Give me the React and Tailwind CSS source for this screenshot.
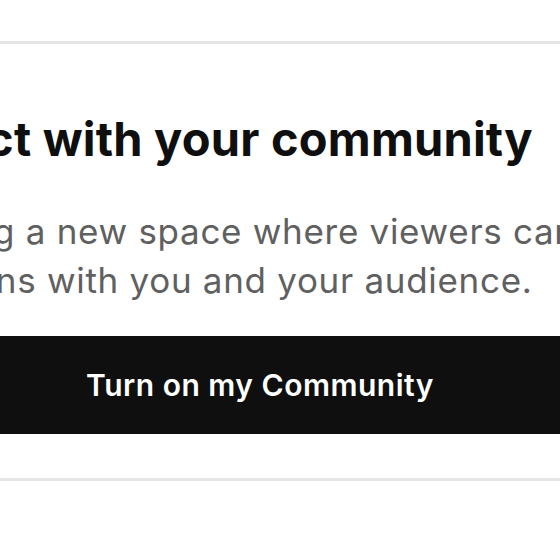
import React from 'react';

const App = () => {
    return (
        <div className="w-[560px] h-[560px] overflow-hidden bg-white" style={{ fontFamily: 'Inter, "Noto Sans", sans-serif' }}>
            <div className="h-[41px]" />
            <div className="h-[3px] bg-[#e5e5e5]" />

            {/* Card body: text starts off-screen to the left */}
            <div className="pt-[67px]">
                <h1 className="-ml-[165px] whitespace-nowrap text-[47px] leading-[56px] font-bold text-[#0f0f0f] tracking-[0.2px]">
                    Connect with your community
                </h1>
                <p className="-ml-[131px] mt-[40px] whitespace-nowrap text-[35px] leading-[49px] text-[#606060] tracking-[0.7px]">
                    Creating a new space where viewers can ask
                    <br />
                    questions with you and your audience.
                </p>
            </div>

            <div className="mt-[31px] -ml-[200px]">
                <button
                    type="button"
                    className="w-[920px] h-[98px] bg-[#0f0f0f] text-white text-[30px] font-semibold tracking-[0.5px] flex items-center justify-center"
                >
                    Turn on my Community
                </button>
            </div>

            <div className="mt-[44px] h-[3px] bg-[#e5e5e5]" />
        </div>
    );
};

export default App;
